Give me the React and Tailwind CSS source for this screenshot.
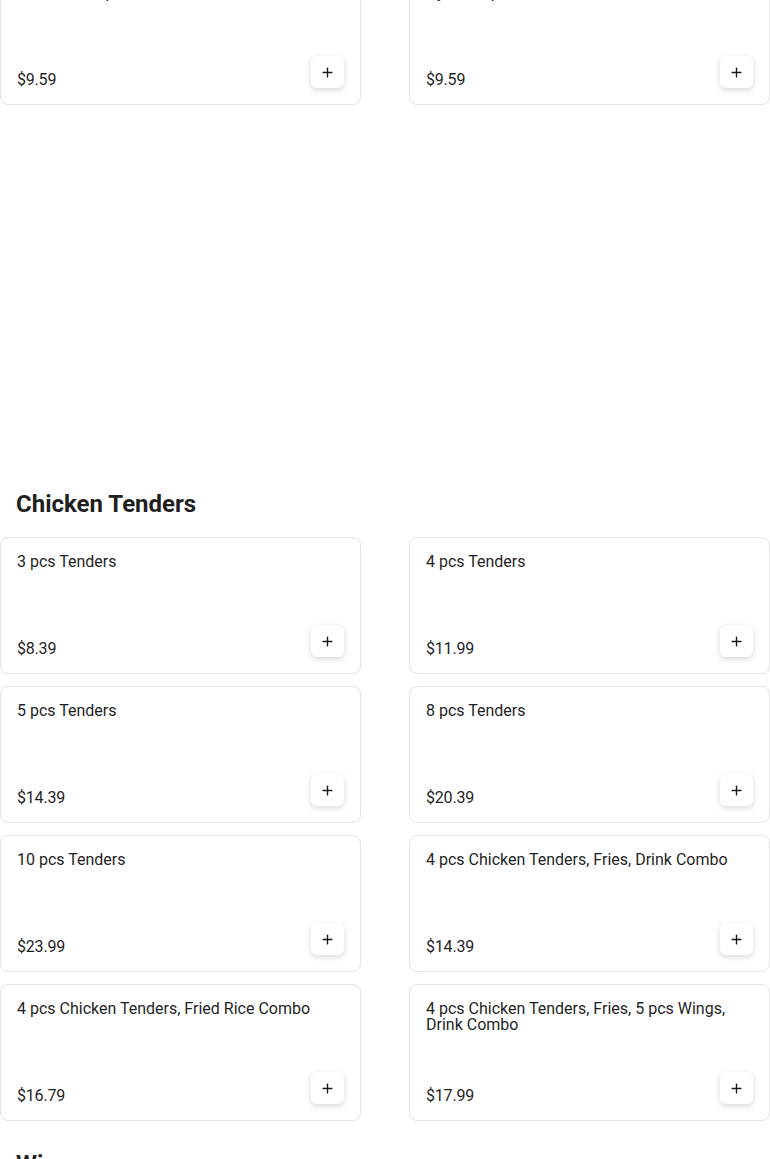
import React from "react";
import { Plus } from "lucide-react";

const tenders = [
  { name: "3 pcs Tenders", price: "$8.39" },
  { name: "4 pcs Tenders", price: "$11.99" },
  { name: "5 pcs Tenders", price: "$14.39" },
  { name: "8 pcs Tenders", price: "$20.39" },
  { name: "10 pcs Tenders", price: "$23.99" },
  { name: "4 pcs Chicken Tenders, Fries, Drink Combo", price: "$14.39" },
  { name: "4 pcs Chicken Tenders, Fried Rice Combo", price: "$16.79" },
  { name: "4 pcs Chicken Tenders, Fries, 5 pcs Wings, Drink Combo", price: "$17.99" },
];

const previous = [
  { name: "Chicken Wrap", price: "$9.59" },
  { name: "Gyro Wrap", price: "$9.59" },
];

function ItemCard({ item }) {
  return (
    <div className="h-[137px] flex flex-col justify-between border border-[#e3e3e3] rounded-lg bg-white p-4">
      <div className="text-base leading-4 text-[#1f1f1f] pr-2">{item.name}</div>
      <div className="flex items-end justify-between">
        <span className="text-base leading-4 text-[#1f1f1f] tracking-[-0.2px]">{item.price}</span>
        <button className="w-[33px] h-[32px] flex items-center justify-center bg-white rounded-md shadow-[0_2px_6px_rgba(0,0,0,0.16)]">
          <Plus size={15} strokeWidth={2.2} className="text-[#1a1a1a]" />
        </button>
      </div>
    </div>
  );
}

export default function App() {
  return (
    <div className="w-[770px] bg-white overflow-hidden h-[1159px]" style={{ fontFamily: "Roboto, 'Liberation Sans', sans-serif" }}>
      {/* tail of the previous section */}
      <div className="grid grid-cols-2 gap-x-12 -mt-[32px]">
        {previous.map((item) => (
          <ItemCard key={item.name} item={item} />
        ))}
      </div>

      <div className="h-[383px]" />

      {/* Chicken Tenders */}
      <section>
        <h2 className="px-4 text-2xl leading-8 font-bold text-[#1f1f1f] mb-[17px]">Chicken Tenders</h2>
        <div className="grid grid-cols-2 gap-x-12 gap-y-3">
          {tenders.map((item) => (
            <ItemCard key={item.name} item={item} />
          ))}
        </div>
      </section>

      <section className="pt-[27px]">
        <h2 className="px-4 text-2xl leading-8 font-bold text-[#1f1f1f] mb-[17px]">Wings</h2>
      </section>
    </div>
  );
}
